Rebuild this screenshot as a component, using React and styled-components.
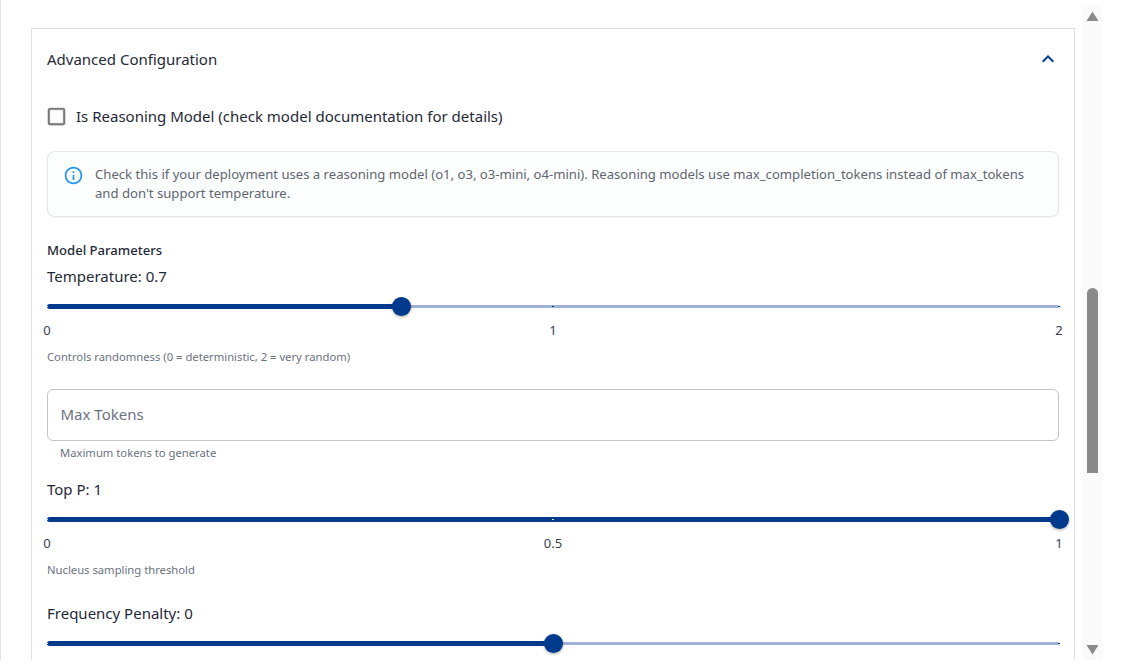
import React from "react";
import styled, { createGlobalStyle } from "styled-components";

const Global = createGlobalStyle`
  html, body { margin: 0; padding: 0; background: #fff; overflow: hidden; }
  * { box-sizing: border-box; }
  body { font-family: "Noto Sans", sans-serif; color: #1f2937; }
`;

const Page = styled.div`
  width: 1121px;
  height: 660px;
  display: flex;
  align-items: flex-start;
`;
const Viewport = styled.div`
  width: 1083px;
  height: 660px;
  overflow: hidden;
  border-left: 1px solid #e2e2e2;
  padding: 28px 8px 0 30px;
`;
const Card = styled.section`
  width: 1044px;
  height: 700px;
  border: 1px solid #e0e0e0;
  padding: 0 15px;
`;
const Header = styled.div`
  height: 60px;
  display: flex;
  align-items: center;
  justify-content: space-between;
`;
const Title = styled.span`
  font-size: 15px;
  color: #1f2937;
`;
const Chevron = styled.svg`
  width: 24px;
  height: 24px;
  fill: #003a8c;
  margin-right: -1px;
`;
const CheckRow = styled.label`
  display: flex;
  align-items: center;
  height: 24px;
  margin: 15px 0 0 -2px;
  gap: 8px;
  font-size: 15px;
  color: #1f2937;
`;
const Box = styled.svg`
  width: 23px;
  height: 23px;
  fill: #7a7a7a;
  stroke: #7a7a7a;
  stroke-width: 0.3;
`;
const Alert = styled.div`
  margin-top: 23px;
  height: 66px;
  display: flex;
  gap: 11px;
  padding: 13px 15px;
  background: #fcfdfd;
  border: 1px solid #e4e7ea;
  border-radius: 8px;
  box-shadow: 0 1px 2px rgba(0, 0, 0, 0.06);
`;
const InfoIcon = styled.svg`
  width: 21px;
  height: 21px;
  flex: none;
  fill: #2196f3;
`;
const AlertText = styled.p`
  margin: 0;
  font-size: 13.125px;
  line-height: 19.2px;
  color: #5f6670;
`;
const SectionLabel = styled.div`
  margin-top: 24px;
  height: 18px;
  line-height: 18px;
  font-size: 13.1px;
  font-weight: 500;
  color: #1f2937;
`;
const ParamLabel = styled.div`
  margin-top: ${(p) => p.$top}px;
  height: 20px;
  line-height: 20px;
  font-size: 15px;
  color: #1f2937;
`;
const Slider = styled.div`
  position: relative;
  height: 3px;
  margin-top: 19px;
  border-radius: 2px;
  background: #9fb3d4;
`;
const Fill = styled.div`
  position: absolute;
  left: 0;
  top: -1px;
  height: 5px;
  border-radius: 3px;
  background: #003a8c;
`;
const Mark = styled.i`
  position: absolute;
  top: 1px;
  width: 2px;
  height: 1px;
  margin-left: -1px;
  background: ${(p) => (p.$active ? "#dfe6f1" : "#003a8c")};
`;
const Thumb = styled.div`
  position: absolute;
  top: -8px;
  width: 19px;
  height: 19px;
  margin-left: -9.5px;
  border-radius: 50%;
  background: #003a8c;
  box-shadow: 0 1px 3px rgba(0, 0, 0, 0.35);
`;
const MarkLabel = styled.span`
  position: absolute;
  top: 16px;
  font-size: 13px;
  line-height: 18px;
  color: #374151;
  transform: translateX(-50%);
`;
const Hint = styled.div`
  margin-top: ${(p) => p.$top ?? 0}px;
  margin-left: ${(p) => p.$indent ?? 0}px;
  height: 16px;
  line-height: 16px;
  font-size: 11.25px;
  color: #6b7280;
`;
const Field = styled.div`
  margin-top: 24px;
  height: 52px;
  border: 1px solid #c4c4c4;
  border-radius: 6px;
  display: flex;
  align-items: center;
  padding: 0 12.5px 2px;
  font-size: 15px;
  color: #6b7280;
`;
const Scrollbar = styled.aside`
  width: 19px;
  height: 655px;
  margin-top: 5px;
  background: #fafafa;
  display: flex;
  flex-direction: column;
  align-items: center;
`;
const Arrow = styled.svg`
  width: 13px;
  height: 11px;
  flex: none;
  fill: #8a8a8a;
  margin-top: ${(p) => p.$top ?? 0}px;
  margin-bottom: ${(p) => p.$bottom ?? 0}px;
`;
const ThumbBar = styled.div`
  width: 11px;
  height: 185px;
  margin-top: 266px;
  margin-bottom: auto;
  border-radius: 6px 6px 0 0;
  background: #8a8a8a;
`;

function Range({ value, marks }) {
  const pct = (v) => `${v * 100}%`;
  return (
    <Slider>
      <Fill style={{ width: pct(value) }} />
      {marks.map((m) => (
        <React.Fragment key={m.at}>
          <Mark $active={m.at < value} style={{ left: pct(m.at) }} />
          {m.label && <MarkLabel style={{ left: pct(m.at) }}>{m.label}</MarkLabel>}
        </React.Fragment>
      ))}
      <Thumb style={{ left: pct(value) }} />
    </Slider>
  );
}

export default function App() {
  return (
    <Page>
      <Global />
      <Viewport>
        <Card>
          <Header>
            <Title>Advanced Configuration</Title>
            <Chevron viewBox="0 0 24 24">
              <path d="M12 8l-6 6 1.41 1.41L12 10.83l4.59 4.58L18 14z" />
            </Chevron>
          </Header>
          <CheckRow>
            <Box viewBox="0 0 24 24">
              <path d="M19 5v14H5V5h14m0-2H5c-1.1 0-2 .9-2 2v14c0 1.1.9 2 2 2h14c1.1 0 2-.9 2-2V5c0-1.1-.9-2-2-2z" />
            </Box>
            Is Reasoning Model (check model documentation for details)
          </CheckRow>
          <Alert>
            <InfoIcon viewBox="0 0 24 24">
              <path d="M11 7h2v2h-2zm0 4h2v6h-2zm1-9C6.48 2 2 6.48 2 12s4.48 10 10 10 10-4.48 10-10S17.52 2 12 2zm0 18c-4.41 0-8-3.59-8-8s3.59-8 8-8 8 3.59 8 8-3.59 8-8 8z" />
            </InfoIcon>
            <AlertText>
              Check this if your deployment uses a reasoning model (o1, o3, o3-mini, o4-mini). Reasoning models use max_completion_tokens instead of max_tokens and don't support temperature.
            </AlertText>
          </Alert>
          <SectionLabel>Model Parameters</SectionLabel>
          <ParamLabel $top={7}>Temperature: 0.7</ParamLabel>
          <Range value={0.35} marks={[{ at: 0, label: "0" }, { at: 0.5, label: "1" }, { at: 1, label: "2" }]} />
          <Hint $top={41}>Controls randomness (0 = deterministic, 2 = very random)</Hint>
          <Field>Max Tokens</Field>
          <Hint $top={4} $indent={13}>Maximum tokens to generate</Hint>
          <ParamLabel $top={18}>Top P: 1</ParamLabel>
          <Range value={1} marks={[{ at: 0, label: "0" }, { at: 0.5, label: "0.5" }, { at: 1, label: "1" }]} />
          <Hint $top={41}>Nucleus sampling threshold</Hint>
          <ParamLabel $top={25}>Frequency Penalty: 0</ParamLabel>
          <Range value={0.5} marks={[{ at: 0 }, { at: 0.5 }, { at: 1 }]} />
        </Card>
      </Viewport>
      <Scrollbar>
        <Arrow viewBox="0 0 13 11" $top={6}>
          <path d="M6.5 0.5 L12.5 10 H0.5 Z" />
        </Arrow>
        <ThumbBar />
        <Arrow viewBox="0 0 13 11" $bottom={5}>
          <path d="M0.5 1 H12.5 L6.5 10.5 Z" />
        </Arrow>
      </Scrollbar>
    </Page>
  );
}
